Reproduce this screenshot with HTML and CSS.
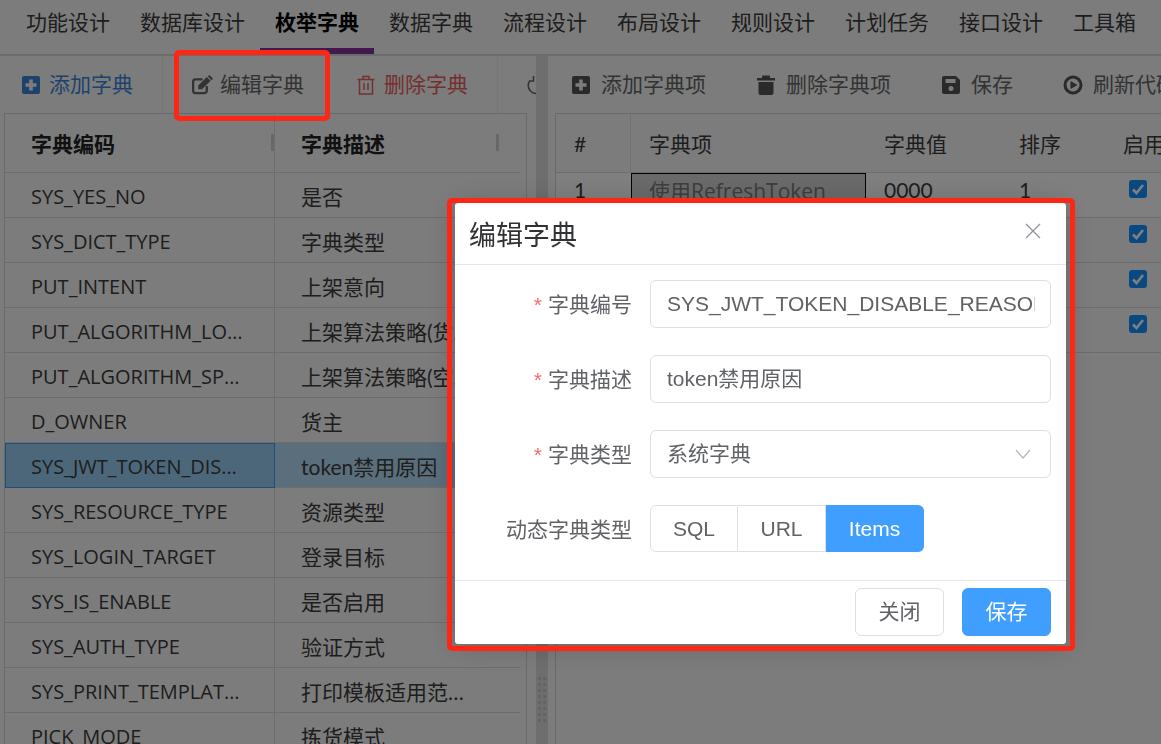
FILE: index.html
```html
<!DOCTYPE html>
<html>
<head>
<meta charset="utf-8">
<title>枚举字典</title>
<link rel="stylesheet" href="styles.css">
</head>

<body>
	<div class="nav">
		<a class="tab">功能设计</a>
		<a class="tab">数据库设计</a>
		<a class="tab active">枚举字典</a>
		<a class="tab">数据字典</a>
		<a class="tab">流程设计</a>
		<a class="tab">布局设计</a>
		<a class="tab">规则设计</a>
		<a class="tab">计划任务</a>
		<a class="tab">接口设计</a>
		<a class="tab">工具箱</a>
	</div>

	<div class="main">
		<div class="left">
			<div class="toolbar left-bar">
				<a class="tool first blue">
					<svg class="icon" viewBox="0 0 20 20"><path fill="currentColor" fill-rule="evenodd" d="M3 1h14a2 2 0 0 1 2 2v14a2 2 0 0 1-2 2H3a2 2 0 0 1-2-2V3a2 2 0 0 1 2-2zM8.200 4.500v3.700H4.500v3.600h3.700v3.700h3.600v-3.700h3.700V8.200h-3.700V4.500z"/></svg>
					<span>添加字典</span>
				</a>
				<a class="tool edit grey">
					<svg class="icon wide" viewBox="0 0 22 20"><path fill="none" stroke="currentColor" stroke-width="2.400" d="M15.500 11v5a2.500 2.500 0 0 1-2.500 2.500H3.500A2.500 2.500 0 0 1 1.200 16V6.500A2.500 2.500 0 0 1 3.500 4H11"/><path fill="currentColor" d="M6.500 10.500 15.500 1.500l4 4-9 9h-4zM16.500.8l1-.8a1 1 0 0 1 1.400 0l2.600 2.600a1 1 0 0 1 0 1.400l-1 1z"/></svg>
					<span>编辑字典</span>
				</a>
				<a class="tool red">
					<svg class="icon" viewBox="0 0 20 20"><path fill="none" stroke="currentColor" stroke-width="1.500" d="M1.500 4.500h17M7 4.500V1.500h6v3M3.500 4.500V19h13V4.500M8 8v7M12 8v7"/></svg>
					<span>删除字典</span>
				</a>
				<a class="tool grey">
					<svg class="icon" viewBox="0 0 20 20"><path fill="none" stroke="currentColor" stroke-width="1.500" d="M3 5.500a8 8 0 1 0 7-3M6.500 1v5H2"/></svg>
				</a>
			</div>
			<div class="grid left-grid">
				<table>
					<colgroup><col class="c-code"><col class="c-desc"></colgroup>
					<thead>
						<tr><th><span>字典编码</span></th><th><span>字典描述</span></th></tr>
					</thead>
					<tbody>
						<tr><td><div>SYS_YES_NO</div></td><td><div>是否</div></td></tr>
						<tr><td><div>SYS_DICT_TYPE</div></td><td><div>字典类型</div></td></tr>
						<tr><td><div>PUT_INTENT</div></td><td><div>上架意向</div></td></tr>
						<tr><td><div>PUT_ALGORITHM_LOCATION</div></td><td><div>上架算法策略(货位)</div></td></tr>
						<tr><td><div>PUT_ALGORITHM_SPACE</div></td><td><div>上架算法策略(空间)</div></td></tr>
						<tr><td><div>D_OWNER</div></td><td><div>货主</div></td></tr>
						<tr class="selected"><td><div>SYS_JWT_TOKEN_DISABLE_REASON</div></td><td><div>token禁用原因</div></td></tr>
						<tr><td><div>SYS_RESOURCE_TYPE</div></td><td><div>资源类型</div></td></tr>
						<tr><td><div>SYS_LOGIN_TARGET</div></td><td><div>登录目标</div></td></tr>
						<tr><td><div>SYS_IS_ENABLE</div></td><td><div>是否启用</div></td></tr>
						<tr><td><div>SYS_AUTH_TYPE</div></td><td><div>验证方式</div></td></tr>
						<tr><td><div>SYS_PRINT_TEMPLATE_SCOPE</div></td><td><div>打印模板适用范围类型</div></td></tr>
						<tr><td><div>PICK_MODE</div></td><td><div>拣货模式</div></td></tr>
					</tbody>
				</table>
			</div>
		</div>

		<div class="splitter"><div class="grip"></div></div>

		<div class="right">
			<div class="toolbar right-bar">
				<a class="rtool">
					<svg class="icon" viewBox="0 0 20 20"><path fill="currentColor" fill-rule="evenodd" d="M3 1h14a2 2 0 0 1 2 2v14a2 2 0 0 1-2 2H3a2 2 0 0 1-2-2V3a2 2 0 0 1 2-2zM8.200 4.500v3.700H4.500v3.600h3.700v3.700h3.600v-3.700h3.700V8.200h-3.700V4.500z"/></svg>
					<span>添加字典项</span>
				</a>
				<a class="rtool">
					<svg class="icon" viewBox="0 0 20 20"><path fill="currentColor" d="M1 3h5V1.500A1 1 0 0 1 7 .5h6a1 1 0 0 1 1 1V3h5v2.500H1zM2.500 7h15v11a2 2 0 0 1-2 2h-11a2 2 0 0 1-2-2z"/></svg>
					<span>删除字典项</span>
				</a>
				<a class="rtool">
					<svg class="icon" viewBox="0 0 20 20"><path fill="currentColor" fill-rule="evenodd" d="M3 1h12l4 4v12a2 2 0 0 1-2 2H3a2 2 0 0 1-2-2V3a2 2 0 0 1 2-2zm1.500 3v4h10V4zM10 11a2.500 2.500 0 1 0 0 5 2.500 2.500 0 0 0 0-5z"/></svg>
					<span>保存</span>
				</a>
				<a class="rtool">
					<svg class="icon" viewBox="0 0 20 20"><path fill="currentColor" fill-rule="evenodd" d="M10 .5a9.500 9.500 0 1 1 0 19 9.500 9.500 0 0 1 0-19zm0 3a6.500 6.500 0 1 0 0 13 6.500 6.500 0 0 0 0-13zM7.500 6l7 4-7 4z"/></svg>
					<span>刷新代码</span>
				</a>
			</div>
			<div class="grid right-grid">
				<table>
					<colgroup><col class="c-no"><col class="c-item"><col class="c-val"><col class="c-sort"><col class="c-on"></colgroup>
					<thead>
						<tr><th>#</th><th>字典项</th><th>字典值</th><th>排序</th><th>启用</th></tr>
					</thead>
					<tbody>
						<tr class="current"><td>1</td><td class="focus">使用RefreshToken</td><td>0000</td><td>1</td><td><span class="check"><svg viewBox="0 0 18 18"><path d="M4 9.500 7.500 13 14 5" fill="none" stroke="#fff" stroke-width="2.600"/></svg></span></td></tr>
						<tr><td>2</td><td></td><td></td><td></td><td><span class="check"><svg viewBox="0 0 18 18"><path d="M4 9.500 7.500 13 14 5" fill="none" stroke="#fff" stroke-width="2.600"/></svg></span></td></tr>
						<tr><td>3</td><td></td><td></td><td></td><td><span class="check"><svg viewBox="0 0 18 18"><path d="M4 9.500 7.500 13 14 5" fill="none" stroke="#fff" stroke-width="2.600"/></svg></span></td></tr>
						<tr><td>4</td><td></td><td></td><td></td><td><span class="check"><svg viewBox="0 0 18 18"><path d="M4 9.500 7.500 13 14 5" fill="none" stroke="#fff" stroke-width="2.600"/></svg></span></td></tr>
					</tbody>
				</table>
			</div>
		</div>
	</div>

	<div class="mask"></div>

	<div class="dialog">
		<div class="dialog-head">
			<span class="dialog-title">编辑字典</span>
			<svg class="close" viewBox="0 0 16 16"><path d="M1 1l14 14M15 1 1 15" fill="none" stroke="#909399" stroke-width="1.300"/></svg>
		</div>
		<div class="dialog-body">
			<div class="field">
				<label class="required">字典编号</label>
				<div class="input"><span>SYS_JWT_TOKEN_DISABLE_REASON</span></div>
			</div>
			<div class="field">
				<label class="required">字典描述</label>
				<div class="input"><span>token禁用原因</span></div>
			</div>
			<div class="field">
				<label class="required">字典类型</label>
				<div class="input select">
					<span>系统字典</span>
					<svg class="arrow" viewBox="0 0 16 10"><path d="M1 1l7 8 7-8" fill="none" stroke="#b4b7bd" stroke-width="1.200"/></svg>
				</div>
			</div>
			<div class="field">
				<label>动态字典类型</label>
				<div class="radios">
					<a class="radio r-sql">SQL</a>
					<a class="radio r-url">URL</a>
					<a class="radio r-items on">Items</a>
				</div>
			</div>
		</div>
		<div class="dialog-foot">
			<a class="btn">关闭</a>
			<a class="btn primary">保存</a>
		</div>
	</div>

	<div class="mark mark-edit"></div>
	<div class="mark mark-dialog"></div>
</body>

</html>
```

FILE: styles.css
```css
*
{
	box-sizing:border-box;
}
html, body
{
	margin:0;
	height:100%;
	overflow:hidden;
}
body
{
	font-family:"Lato","Noto Sans CJK SC",sans-serif;
	font-size:21px;
	color:#3c3c3c;
	background:#fff;
}

/* top tabs */
.nav
{
	display:flex;
	height:56px;
	padding-left:11px;
	background:#f8f8f8;
	border-bottom:2px solid #d8d8d8;
}
.tab
{
	height:54px;
	padding:0 15px;
	line-height:44px;
	white-space:nowrap;
}
.tab.active
{
	font-weight:bold;
	color:#000;
	border-bottom:6px solid #7e3494;
}

.main
{
	display:flex;
	height:688px;
}
.left
{
	display:flex;
	flex-direction:column;
	width:536px;
	flex:none;
	background:#f8f8f8;
}
.splitter
{
	display:flex;
	flex:none;
	align-items:flex-end;
	justify-content:center;
	width:12px;
	padding-bottom:19px;
	background:#dcdcdc;
}
.grip
{
	width:8px;
	height:48px;
	background-image:linear-gradient(90deg,transparent 3px,#dcdcdc 3px,#dcdcdc 5px,transparent 5px),linear-gradient(#c6c6c6 3px,transparent 3px);
	background-size:8px 6px,8px 6px;
}
.right
{
	flex:1;
	min-width:0;
	display:flex;
	flex-direction:column;
	background:#f8f8f8;
}

/* toolbars */
.toolbar
{
	display:flex;
	align-items:center;
	height:57px;
	flex:none;
	overflow:hidden;
	white-space:nowrap;
}
.toolbar span
{
	margin-bottom:3px;
}
.tool, .rtool
{
	display:flex;
	align-items:center;
	height:100%;
	flex:none;
}
.tool
{
	padding:0 29px;
	border-right:1px solid #ececec;
	gap:8px;
}
.tool.first
{
	padding-left:21px;
}
.tool.edit
{
	padding-right:22px;
	gap:7px;
}
.rtool
{
	gap:10px;
	margin-right:50px;
}
.right-bar
{
	padding-left:23px;
}
.icon
{
	width:20px;
	height:20px;
	flex:none;
}
.icon.wide
{
	width:21px;
}
.blue {color:#3a86d8;}
.grey {color:#666;}
.red {color:#e86060;}
.rtool {color:#666;}
.rtool .icon {color:#555;}

/* tables */
.grid
{
	flex:1;
	overflow:hidden;
	border-top:1px solid #d4d4d4;
	border-left:1px solid #d4d4d4;
}
.left-grid
{
	width:523px;
	margin-left:4px;
	border-right:1px solid #d4d4d4;
}
.right-grid
{
	margin-left:7px;
}
table
{
	border-collapse:separate;
	border-spacing:0;
	table-layout:fixed;
}
.left-grid table {width:515px;}
.right-grid table {width:606px;}
.c-code {width:270px;}
.c-no {width:75px;}
.c-item {width:235px;}
.c-val {width:135px;}
.c-sort {width:104px;}
.c-on {width:57px;}

th, td
{
	text-align:left;
	font-weight:normal;
	white-space:nowrap;
	border-bottom:1px solid #dadada;
	padding:0;
}
th
{
	height:59px;
}
td
{
	height:45px;
}
.left-grid th
{
	position:relative;
	padding-left:26px;
	font-weight:bold;
	color:#222;
}
.left-grid th:after
{
	content:"";
	position:absolute;
	right:0;
	top:20px;
	width:3px;
	height:17px;
	background:#d0d0d0;
}
.left-grid th:last-child:after
{
	right:21px;
}
.left-grid td:first-child, .left-grid th:first-child
{
	border-right:1px solid #dadada;
}
.left-grid td div
{
	padding-left:26px;
	padding-right:27px;
	padding-top:1px;
	overflow:hidden;
	text-overflow:ellipsis;
}
.left-grid td:first-child div
{
	padding-top:3px;
	font-family:"Open Sans",sans-serif;
	font-size:20px;
}
.left-grid td:last-child div
{
	padding-right:44px;
}
.selected td
{
	background:#b4dcf8;
}
.selected td:first-child
{
	background:#98cff5;
	outline:1px solid #3e9bff;
	outline-offset:-1px;
}

.right-grid th, .right-grid td
{
	padding-left:18px;
}
.right-grid td
{
	padding-bottom:11px;
}
.right-grid th:first-child
{
	border-right:1px solid #e4e4e4;
}
.right-grid tr.current td
{
	background:#fff;
}
.right-grid tr.current td.focus
{
	background:#d4d4d4;
	color:#7a7a7a;
	font-family:"Open Sans","Noto Sans CJK SC",sans-serif;
	outline:1px solid #000;
	outline-offset:-1px;
}
.check
{
	display:block;
	width:18px;
	height:18px;
	margin-left:6px;
	margin-bottom:2px;
	border-radius:3px;
	background:#1592ff;
}
.check svg
{
	display:block;
}

/* modal */
.mask
{
	position:fixed;
	left:0;
	top:0;
	right:0;
	bottom:0;
	background:rgba(0,0,0,.5);
}
.dialog
{
	position:fixed;
	left:455px;
	top:203px;
	width:611px;
	height:441px;
	display:flex;
	flex-direction:column;
	background:#fff;
	border-radius:3px;
	box-shadow:0 2px 30px rgba(0,0,0,.2);
	font-family:"Liberation Sans","Noto Sans CJK SC",sans-serif;
	color:#606266;
}
.dialog-head
{
	display:flex;
	align-items:center;
	justify-content:space-between;
	height:62px;
	padding:0 25px 0 14px;
	border-bottom:1px solid #e4e7ed;
	flex:none;
}
.dialog-title
{
	font-size:27px;
	color:#303133;
}
.close
{
	width:16px;
	height:16px;
	margin-bottom:6px;
}
.dialog-body
{
	display:flex;
	flex-direction:column;
	gap:27px;
	padding:15px 15px 0 0;
}
.field
{
	display:flex;
	align-items:center;
	gap:18px;
	height:48px;
}
.field label
{
	width:177px;
	flex:none;
	margin-bottom:3px;
	text-align:right;
}
.required:before
{
	content:"*";
	color:#f56c6c;
	margin-right:6px;
}
.input
{
	flex:1;
	min-width:0;
	height:48px;
	padding:0 15px 0 16px;
	line-height:46px;
	white-space:nowrap;
	border:1.500px solid #dcdfe6;
	border-radius:6px;
}
.input span
{
	display:block;
	overflow:hidden;
}
.select
{
	display:flex;
	align-items:center;
	justify-content:space-between;
}
.arrow
{
	width:16px;
	height:10px;
	flex:none;
	margin-right:4px;
}
.radios
{
	display:flex;
	align-self:flex-start;
}
.radio
{
	height:47px;
	text-align:center;
	line-height:45px;
	border:1px solid #dcdfe6;
	border-left:none;
}
.r-sql {width:88px;}
.r-url {width:88px;}
.r-items {width:98px;}
.radio:first-child
{
	border-left:1px solid #dcdfe6;
	border-radius:6px 0 0 6px;
}
.radio.on
{
	color:#fff;
	background:#409eff;
	border-color:#409eff;
	border-radius:0 6px 6px 0;
}
.dialog-foot
{
	display:flex;
	justify-content:flex-end;
	gap:18px;
	height:64px;
	margin-top:auto;
	padding:7px 15px 0 0;
	border-top:1px solid #e4e7ed;
}
.btn
{
	width:89px;
	height:48px;
	text-align:center;
	line-height:46px;
	border:1px solid #dcdfe6;
	border-radius:6px;
}
.btn.primary
{
	color:#fff;
	background:#409eff;
	border-color:#409eff;
}

/* red annotation frames */
.mark
{
	position:fixed;
	border:5px solid #ff2616;
	border-radius:5px;
}
.mark-edit
{
	left:174px;
	top:50px;
	width:156px;
	height:71px;
}
.mark-dialog
{
	left:447px;
	top:198px;
	width:628px;
	height:453px;
}
```
